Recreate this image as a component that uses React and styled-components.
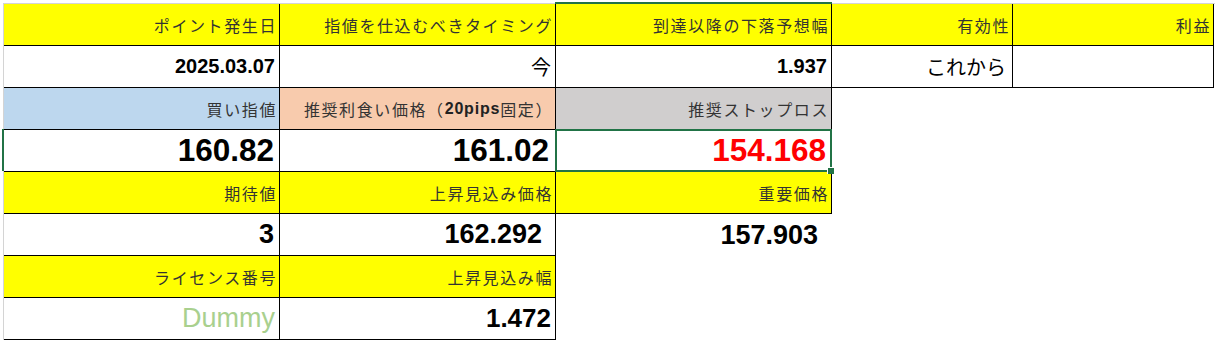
import React from "react";
import styled, { createGlobalStyle } from "styled-components";

const GlobalStyle = createGlobalStyle`
  body {
    margin: 0;
    background: #ffffff;
  }
`;

const JP = `"Noto Sans CJK JP", "Noto Sans", sans-serif`;
const NUM = `"Liberation Sans", Arial, sans-serif`;

const Sheet = styled.div`
  width: 1215px;
  height: 343px;
  padding: 3px 0 0 3px;
  box-sizing: border-box;
  overflow: hidden;
`;

const Grid = styled.div`
  display: grid;
  grid-template-columns: 276px 276px 276px 181px 201px;
  grid-auto-rows: 42px;
  border-top: 1px solid #d4d4d4;
  border-left: 1px solid #d4d4d4;
  width: 1211px;
`;

const Cell = styled.div`
  position: relative;
  box-sizing: border-box;
  display: flex;
  align-items: center;
  justify-content: flex-end;
  white-space: nowrap;
  padding-right: ${(p) => (p.$pad != null ? p.$pad : 3)}px;
  background: ${(p) => p.$bg || "#ffffff"};
  border-right: ${(p) => (p.$edge ? "1px solid #000" : "none")};
  border-bottom: ${(p) => (p.$edge ? "1px solid #000" : "none")};
  z-index: ${(p) => (p.$selected ? 2 : 1)};

  ${(p) =>
    p.$active &&
    `
    &::before {
      content: "";
      position: absolute;
      top: -2px;
      left: -1px;
      right: -1px;
      height: 2px;
      background: #217346;
    }
  `}

  ${(p) =>
    p.$rowMark &&
    `
    &::before {
      content: "";
      position: absolute;
      top: -1px;
      bottom: 0;
      left: -2px;
      width: 2px;
      background: #217346;
    }
  `}

  ${(p) =>
    p.$selected &&
    `
    &::after {
      content: "";
      position: absolute;
      top: -1px;
      left: -1px;
      right: -1px;
      bottom: -1px;
      border: 2px solid #217346;
      pointer-events: none;
    }
  `}
`;

const Handle = styled.span`
  position: absolute;
  right: -3px;
  bottom: -3px;
  width: 6px;
  height: 6px;
  background: #217346;
  border-top: 1px solid #ffffff;
  border-left: 1px solid #ffffff;
  z-index: 3;
`;

const Header = styled(Cell)`
  font-family: ${JP};
  font-size: 16px;
  letter-spacing: 1.6px;
  color: #333333;
  padding-right: 2px;
`;

const Latin = styled.span`
  font-family: ${NUM};
  font-weight: bold;
  letter-spacing: 0.8px;
  color: #222222;
`;

const Num = styled(Cell)`
  font-family: ${NUM};
  font-weight: bold;
  font-size: ${(p) => p.$size}px;
  color: ${(p) => p.$color || "#000000"};
`;

const Kana = styled(Cell)`
  font-family: ${JP};
  font-size: 20px;
  color: #000000;
`;

const Dummy = styled(Cell)`
  font-family: ${NUM};
  font-size: 27px;
  color: #a9d08e;
`;

const Blank = styled.div``;

const YELLOW = "#ffff00";

export default function App() {
  return (
    <Sheet>
      <GlobalStyle />
      <Grid>
        {/* row 1 */}
        <Header $edge $bg={YELLOW}>ポイント発生日</Header>
        <Header $edge $bg={YELLOW}>指値を仕込むべきタイミング</Header>
        <Header $edge $bg={YELLOW} $active>到達以降の下落予想幅</Header>
        <Header $edge $bg={YELLOW}>有効性</Header>
        <Header $edge $bg={YELLOW}>利益</Header>

        {/* row 2 */}
        <Num $edge $size={20} $pad={4}>2025.03.07</Num>
        <Kana $edge $pad={4}>今</Kana>
        <Num $edge $size={20} $pad={4}>1.937</Num>
        <Kana $edge $pad={6}>これから</Kana>
        <Cell $edge />

        {/* row 3 */}
        <Header $edge $bg="#bdd7ee">買い指値</Header>
        <Header $edge $bg="#f8cbad">
          推奨利食い価格（<Latin>20pips</Latin>固定）
        </Header>
        <Header $edge $bg="#d0cece">推奨ストップロス</Header>
        <Blank />
        <Blank />

        {/* row 4 */}
        <Num $edge $size={31.5} $pad={5} $rowMark>160.82</Num>
        <Num $edge $size={31.5} $pad={6}>161.02</Num>
        <Num $edge $size={31.5} $pad={5} $color="#ff0000" $selected>
          154.168
          <Handle />
        </Num>
        <Blank />
        <Blank />

        {/* row 5 */}
        <Header $edge $bg={YELLOW}>期待値</Header>
        <Header $edge $bg={YELLOW}>上昇見込み価格</Header>
        <Header $edge $bg={YELLOW}>重要価格</Header>
        <Blank />
        <Blank />

        {/* row 6 */}
        <Num $edge $size={27} $pad={5}>3</Num>
        <Num $edge $size={27} $pad={13}>162.292</Num>
        <Num $size={27} $pad={14}>157.903</Num>
        <Blank />
        <Blank />

        {/* row 7 */}
        <Header $edge $bg={YELLOW}>ライセンス番号</Header>
        <Header $edge $bg={YELLOW}>上昇見込み幅</Header>
        <Blank />
        <Blank />
        <Blank />

        {/* row 8 */}
        <Dummy $edge $pad={4}>Dummy</Dummy>
        <Num $edge $size={26} $pad={4}>1.472</Num>
      </Grid>
    </Sheet>
  );
}
